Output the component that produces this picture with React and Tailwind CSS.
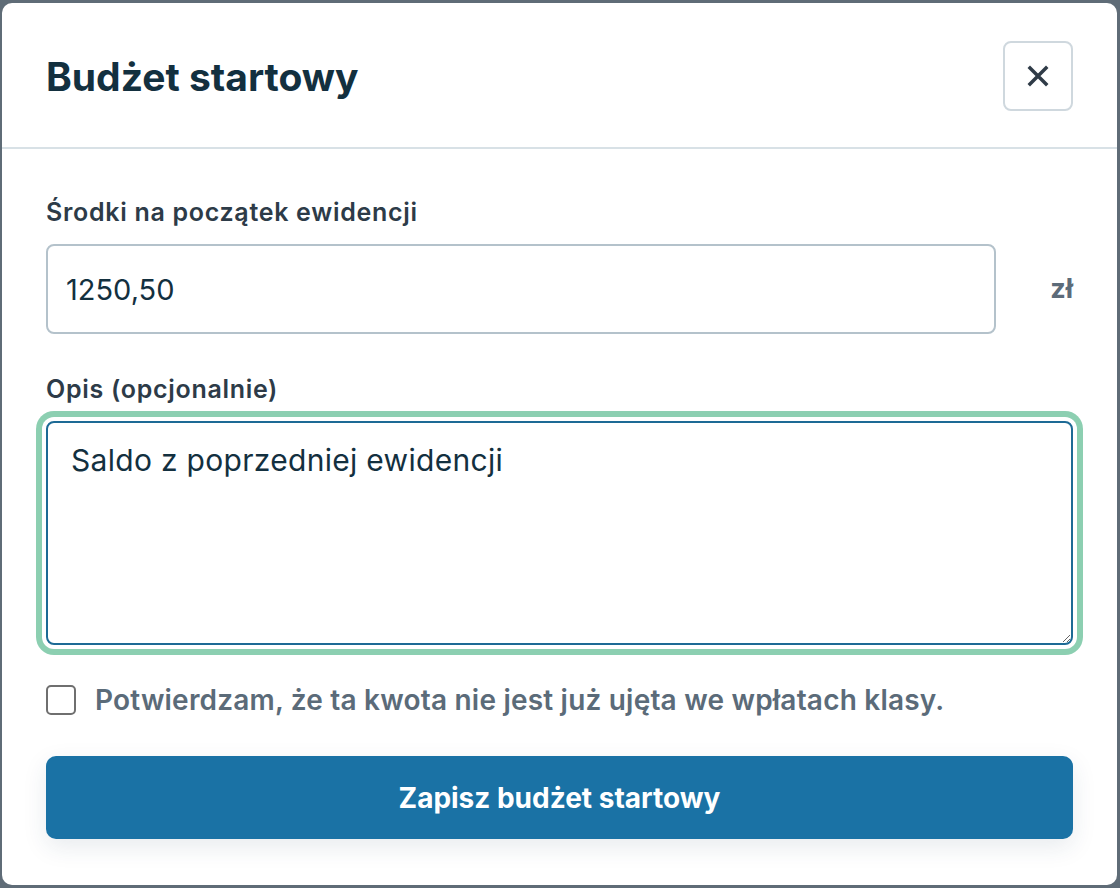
import React, { useState } from "react";

const App = () => {
  const [amount, setAmount] = useState("1250,50");
  const [note, setNote] = useState("Saldo z poprzedniej ewidencji");
  const [confirmed, setConfirmed] = useState(false);

  return (
    <div
      className="h-[888px] w-[1120px] overflow-hidden bg-[#5f6c77] pt-[3px] pl-[2px] pr-[3px] pb-[3px]"
      style={{ fontFamily: "Inter, 'Noto Sans', sans-serif" }}
    >
      <div className="flex h-full flex-col rounded-[10px] bg-white">
        {/* header */}
        <div className="flex items-center justify-between border-b-2 border-[#d8e1e6] pl-[44px] pr-[44px] pt-[38px] pb-[36px]">
          <h1 className="text-[39px] font-bold leading-none text-[#13303f]">
            Budżet startowy
          </h1>
          <button className="flex h-[70px] w-[70px] items-center justify-center rounded-[8px] border-2 border-[#cfd8de] bg-white">
            <svg width="22" height="22" viewBox="0 0 22 22" fill="none" stroke="#2f3b47" strokeWidth="3.5" strokeLinecap="square">
              <path d="M3 3l16 16M19 3L3 19" />
            </svg>
          </button>
        </div>

        {/* body */}
        <div className="flex flex-col px-[44px] pt-[48px]">
          <label className="text-[25px] font-semibold leading-[30px] tracking-[0.7px] text-[#2d3b48]">
            Środki na początek ewidencji
          </label>
          <div className="mt-[17px] flex items-center gap-[53px]">
            <input
              type="text"
              value={amount}
              onChange={(e) => setAmount(e.target.value)}
              className="h-[90px] flex-1 rounded-[8px] border-2 border-[#b4c2cb] bg-white px-[18px] text-[29px] text-[#13303f] outline-none"
            />
            <span className="w-[24px] text-right text-[27px] font-bold text-[#5c6b79]">zł</span>
          </div>

          <label className="mt-[40px] text-[25px] font-semibold leading-[30px] tracking-[0.7px] text-[#2d3b48]">
            Opis (opcjonalnie)
          </label>
          <textarea
            value={note}
            onChange={(e) => setNote(e.target.value)}
            className="mt-[17px] h-[224px] w-full resize-y rounded-[8px] border-2 border-[#1d6a95] bg-white px-[23px] py-[17px] text-[30px] leading-[40px] tracking-[0.3px] text-[#13303f] outline-none ring-[6px] ring-[#8ccfb1] ring-offset-[4px] ring-offset-white"
          />

          <label className="mt-[38px] flex items-center gap-[19px]">
            <input
              type="checkbox"
              checked={confirmed}
              onChange={(e) => setConfirmed(e.target.checked)}
              className="h-[30px] w-[30px] shrink-0 appearance-none rounded-[5px] border-2 border-[#6f6f6f] bg-white"
            />
            <span className="text-[28px] font-semibold leading-[34px] tracking-[0.2px] text-[#5b6b79]">
              Potwierdzam, że ta kwota nie jest już ujęta we wpłatach klasy.
            </span>
          </label>

          <button className="mt-[39px] h-[83px] w-full rounded-[10px] bg-[#1a72a5] text-[28px] font-bold text-white shadow-[0_8px_24px_rgba(30,60,90,0.10)]">
            Zapisz budżet startowy
          </button>
        </div>
      </div>
    </div>
  );
};

export default App;
